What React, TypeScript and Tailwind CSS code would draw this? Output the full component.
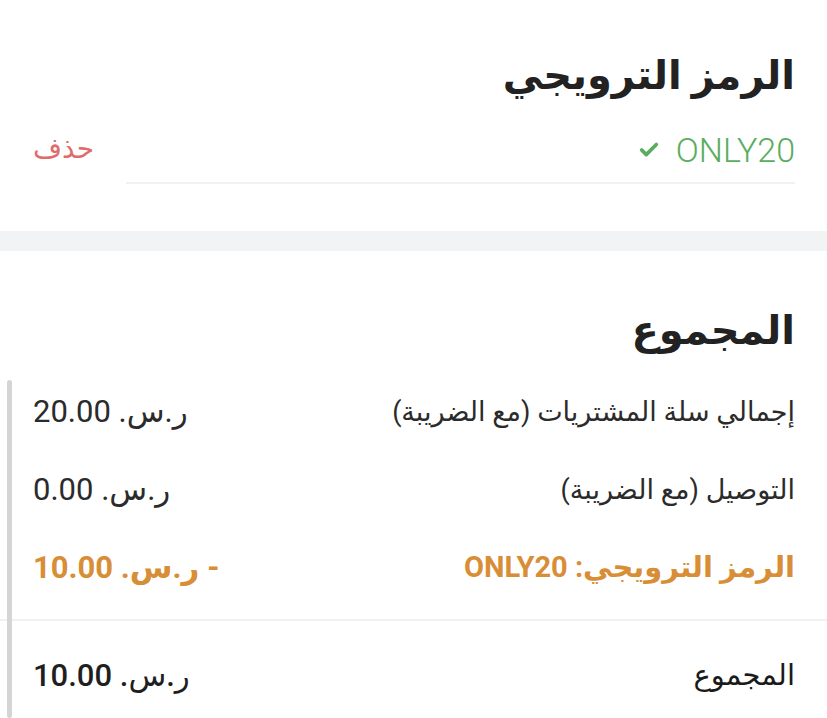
import { Check } from 'lucide-react'

const FONT = '"Roboto", "DejaVu Sans", sans-serif'

type Line = {
  label: string
  amount: string
  tone?: 'plain' | 'promo' | 'total'
}

const LINES: Line[] = [
  { label: 'إجمالي سلة المشتريات (مع الضريبة)', amount: 'ر.س. 20.00' },
  { label: 'التوصيل (مع الضريبة)', amount: 'ر.س. 0.00' },
  { label: 'الرمز الترويجي: ONLY20', amount: '- ر.س. 10.00', tone: 'promo' },
]

function SummaryRow({ label, amount, tone = 'plain' }: Line) {
  const labelCls =
    tone === 'promo'
      ? 'text-[29px] font-bold text-[#d88e36]'
      : tone === 'total'
        ? 'text-[29px] text-[#1a1a1a]'
        : 'text-[27px] text-[#2b2b2b]'
  const amountCls =
    tone === 'promo' ? 'font-bold text-[#d88e36]' : tone === 'total' ? 'font-medium text-[#1f1f1f]' : 'text-[#2b2b2b]'
  return (
    <div className="flex h-[78px] items-center justify-between">
      <span className={labelCls}>{label}</span>
      <span className={`text-[31px] ${amountCls}`}>{amount}</span>
    </div>
  )
}

export default function App() {
  return (
    <div dir="rtl" className="relative min-h-[718px] w-full overflow-hidden bg-white" style={{ fontFamily: FONT }}>
      {/* promo code */}
      <section className="h-[231px] px-8 pt-[46px]">
        <h2 className="text-[40px] font-bold leading-[60px] text-[#222]">الرمز الترويجي</h2>
        <div className="mt-[8px] flex items-center gap-8 pl-[1px]">
          <div className="flex h-[70px] flex-1 items-center gap-[16px] border-b-2 border-[#f1f1f1] pt-1">
            <span className="text-[34px] font-light text-[#5aad5e]" dir="ltr">
              ONLY20
            </span>
            <Check className="h-[22px] w-[22px] text-[#5aad5e]" strokeWidth={4} />
          </div>
          <button className="text-[28px] text-[#e06b6b]">حذف</button>
        </div>
      </section>

      <div className="h-5 bg-[#f2f3f5]" />

      {/* totals */}
      <section className="pt-[50px]">
        <h2 className="px-8 text-[40px] font-bold leading-[60px] text-[#222]">المجموع</h2>
        <div className="mt-[12px] px-8 pl-[33px]">
          {LINES.map((l) => (
            <SummaryRow key={l.label} {...l} />
          ))}
        </div>
        <div className="mt-[12px] h-[2px] bg-[#f1f1f1]" />
        <div className="px-8 pl-[33px] pt-[16px]">
          <SummaryRow label="المجموع" amount="ر.س. 10.00" tone="total" />
        </div>
      </section>

      {/* scroll indicator */}
      <div className="absolute bottom-0 left-[7px] top-[380px] w-[5px] rounded-full bg-[#d5d5d5]" />
    </div>
  )
}
